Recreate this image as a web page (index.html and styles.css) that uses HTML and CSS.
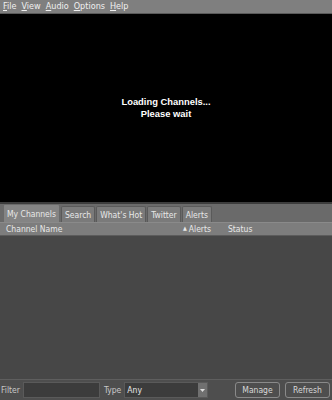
FILE: index.html
```html
<!DOCTYPE html>
<html>
<head>
<meta charset="utf-8">
<link rel="stylesheet" href="styles.css">
</head>
<body>
<div class="app">
  <div class="menubar">
    <span class="menu"><u>F</u>ile</span>
    <span class="menu"><u>V</u>iew</span>
    <span class="menu"><u>A</u>udio</span>
    <span class="menu"><u>O</u>ptions</span>
    <span class="menu"><u>H</u>elp</span>
  </div>
  <div class="video">
    <div class="loading">Loading Channels...<br>Please wait</div>
  </div>
  <div class="panel">
    <div class="tabs">
      <span class="tab active">My Channels</span>
      <span class="tab">Search</span>
      <span class="tab">What's Hot</span>
      <span class="tab">Twitter</span>
      <span class="tab">Alerts</span>
    </div>
    <div class="header">
      <span class="col-name">Channel Name</span>
      <span class="col-alerts"><span class="arrow">▲</span>Alerts</span>
      <span class="col-status">Status</span>
    </div>
    <div class="list"></div>
    <div class="bottom">
      <span class="label">Filter</span>
      <span class="input filter"></span>
      <span class="label">Type</span>
      <span class="select"><span class="seltext">Any</span><span class="selbtn"><svg width="7" height="5" viewBox="0 0 7 5"><path d="M1 1h5L3.5 4z" fill="#ddd"/></svg></span></span>
      <span class="spacer"></span>
      <span class="btn">Manage</span>
      <span class="btn">Refresh</span>
    </div>
  </div>
</div>
</body>
</html>
```
FILE: styles.css
```css
html, body {
  margin: 0;
  padding: 0;
  background: #505050;
}
.app {
  width: 332px;
  height: 400px;
  display: flex;
  flex-direction: column;
  font-family: "DejaVu Sans Condensed", "DejaVu Sans", sans-serif;
  font-size: 8.5px;
  color: #e8e8e8;
  overflow: hidden;
}
.menubar {
  height: 13px;
  background: #7f7f7f;
  display: flex;
  align-items: center;
  padding-left: 3px;
  border-bottom: 1px solid #5a5a5a;
  gap: 5px;
  font-size: 9px;
}
.menu {
  line-height: 13px;
  color: #f0f0f0;
}
.menu u { text-decoration: underline; }
.video {
  height: 188px;
  background: #000;
  display: flex;
  align-items: center;
  justify-content: center;
  border-bottom: 2px solid #3c3c3c;
}
.loading {
  font-family: "Liberation Sans", Arial, sans-serif;
  font-weight: bold;
  font-size: 9.4px;
  line-height: 12px;
  text-align: center;
  color: #fff;
}
.panel {
  flex: 1;
  display: flex;
  flex-direction: column;
  background: #6e6e6e;
}
.tabs {
  display: flex;
  padding: 0 0 0 3px;
  background: #6a6a6a;
  height: 18px;
  gap: 1px;
}
.tab {
  background: #7a7a7a;
  border: 1px solid #5a5a5a;
  border-bottom: none;
  border-radius: 2px 2px 0 0;
  padding: 0 3px;
  line-height: 17px;
  height: 16px;
  margin-top: 2px;
  color: #e8e8e8;
}
.tab.active {
  background: #848484;
  height: 18px;
  line-height: 19px;
  margin-top: 0;
  border-color: #6a6a6a;
}
.header {
  height: 12px;
  background: #7d7d7d;
  display: flex;
  align-items: center;
  border-top: 1px solid #8a8a8a;
  border-bottom: 1px solid #5c5c5c;
  line-height: 13px;
}
.col-name { padding-left: 6px; width: 177px; }
.col-alerts { width: 45px; }
.arrow { font-size: 5.5px; vertical-align: 2px; margin-right: 2px; }
.col-status { padding-left: 0; }
.list {
  flex: 1;
  background: #474747;
}
.bottom {
  height: 20px;
  background: #4e4e4e;
  display: flex;
  align-items: center;
  padding: 0 2px 0 1px;
  border-top: 1px solid #5e5e5e;
}
.label { color: #c8c8c8; margin-right: 3px; }
.input {
  background: #3c3c3c;
  border: 1px solid #5a5a5a;
  height: 16px;
  box-sizing: border-box;
}
.filter { width: 77px; margin-right: 4px; }
.select {
  display: flex;
  width: 84px;
  height: 16px;
  background: #3c3c3c;
  border: 1px solid #5a5a5a;
  box-sizing: border-box;
}
.seltext { flex: 1; padding-left: 2px; line-height: 14px; color: #e8e8e8; }
.selbtn {
  width: 9px;
  background: #707070;
  display: flex;
  align-items: center;
  justify-content: center;
}
.spacer { flex: 1; }
.btn {
  border: 1px solid #8a8a8a;
  border-radius: 3px;
  height: 16px;
  line-height: 14px;
  box-sizing: border-box;
  width: 45px;
  text-align: center;
  color: #d8d8d8;
  margin-left: 5px;
}
```
